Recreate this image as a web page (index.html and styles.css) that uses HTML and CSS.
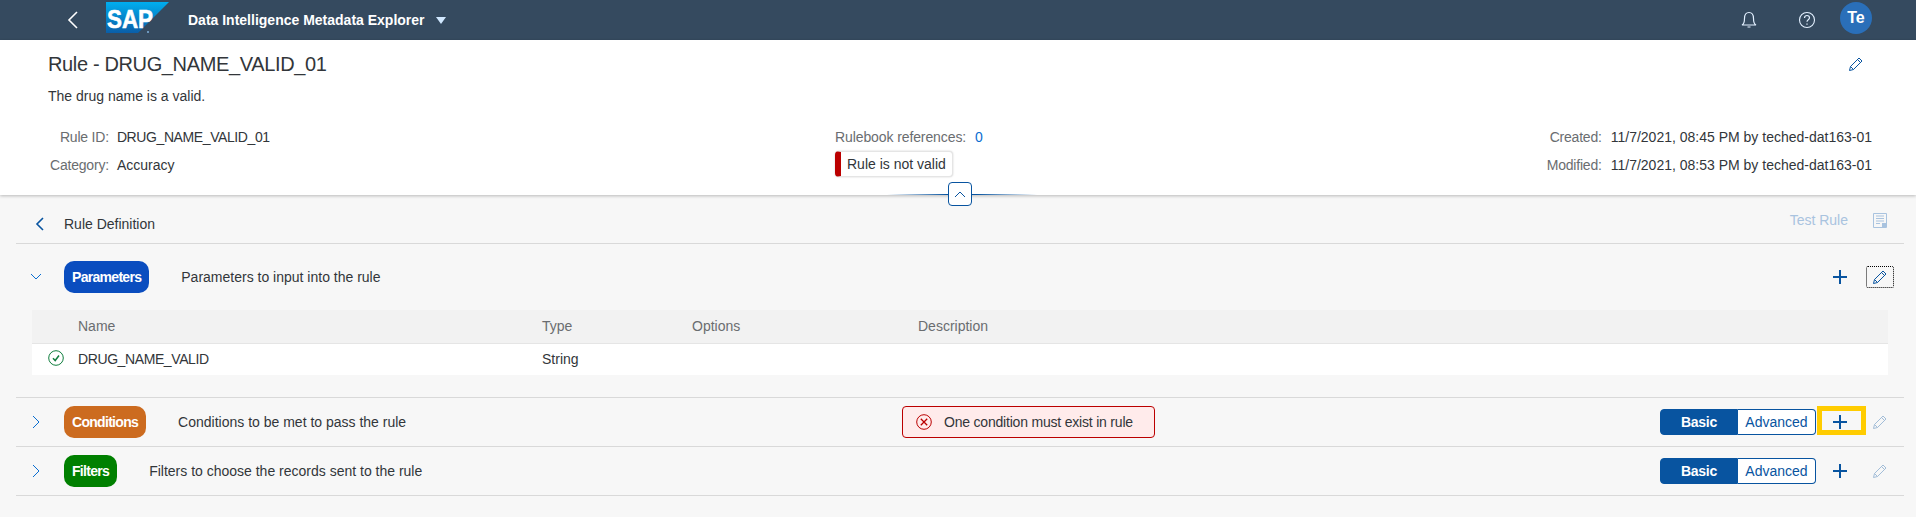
FILE: index.html
```html
<!DOCTYPE html>
<html>
	<head>
		<meta charset="UTF-8">
		<title>Rule - DRUG_NAME_VALID_01</title>
		<link rel="stylesheet" href="styles.css">
	</head>
	<body>
		<div class="shell">
			<svg class="shell-back" width="12" height="20" viewBox="0 0 12 20"><path d="M10 2L2 10l8 8" fill="none" stroke="#fff" stroke-width="1.6"/></svg>
			<svg class="logo" width="63" height="31" viewBox="0 0 63 31">
				<defs>
					<linearGradient id="logoGrad" x1="0" y1="0" x2="0" y2="1">
						<stop offset="0" stop-color="#00aeef"/>
						<stop offset="1" stop-color="#0a5ea8"/>
					</linearGradient>
				</defs>
				<polygon points="0,0 63,0 32,31 0,31" fill="url(#logoGrad)"/>
				<text x="1" y="26" class="logo-text" textLength="46" lengthAdjust="spacingAndGlyphs">SAP</text>
				<circle cx="42" cy="30" r="1" fill="#7fb2dc"/>
			</svg>
			<span class="shell-title">Data Intelligence Metadata Explorer</span>
			<span class="shell-arrow"></span>
			<div class="shell-right">
				<svg width="16" height="18" viewBox="0 0 16 18"><path d="M1 14c2-1 2.500-3 2.500-6.500C3.500 4 5 1.500 8 1.500s4.500 2.500 4.500 6c0 3.500.5 5.500 2.500 6.500zM6.500 16h3" fill="none" stroke="#e3f0ff" stroke-width="1.200"/></svg>
				<svg class="shell-help" width="18" height="18" viewBox="0 0 18 18"><circle cx="9" cy="9" r="7.500" fill="none" stroke="#e3f0ff" stroke-width="1.100"/><path d="M6.500 7c0-1.500 1-2.500 2.500-2.500s2.500 1 2.500 2.300c0 2-2.500 2-2.500 4M9 12.500v1.300" fill="none" stroke="#e3f0ff" stroke-width="1.200"/></svg>
				<span class="avatar">Te</span>
			</div>
		</div>

		<div class="top">
			<div class="top-head">
				<h1 class="top-title">Rule - DRUG_NAME_VALID_01</h1>
				<svg class="icon-edit" width="16" height="16" viewBox="0 0 16 16"><path d="M1.500 14.500l1-4L11 2l3 3-8.500 8.500zM2.500 10.500l3 3M9.500 3.500l3 3" fill="none" stroke="#0854a0"/></svg>
			</div>
			<p class="top-desc">The drug name is a valid.</p>
			<div class="meta">
				<div class="meta-list meta-left">
					<span class="label">Rule ID:</span><span class="id-text">DRUG_NAME_VALID_01</span>
					<span class="label">Category:</span><span>Accuracy</span>
				</div>
				<div class="meta-mid">
					<div class="refs"><span class="label">Rulebook references:</span><a class="refs-num">0</a></div>
					<div class="chip">Rule is not valid</div>
				</div>
				<div class="meta-list meta-right">
					<span class="label">Created:</span><span>11/7/2021, 08:45 PM by teched-dat163-01</span>
					<span class="label">Modified:</span><span>11/7/2021, 08:53 PM by teched-dat163-01</span>
				</div>
			</div>
			<div class="collapse">
				<span class="collapse-btn"><svg width="12" height="8" viewBox="0 0 12 8"><path d="M1 7l5-5 5 5" fill="none" stroke="#0854a0"/></svg></span>
			</div>
		</div>

		<div class="main">
			<div class="def-head">
				<svg class="def-back" width="10" height="14" viewBox="0 0 10 14"><path d="M8 1L2 7l6 6" fill="none" stroke="#0854a0" stroke-width="1.600"/></svg>
				<span class="def-title">Rule Definition</span>
				<span class="test-rule">Test Rule</span>
				<svg class="save" width="14" height="15" viewBox="0 0 14 15"><path d="M.5.500h13v14H.5zM3 3h8M3 5.500h8M3 8h8M3 10.500h4" fill="none" stroke="#a9c3df"/><path d="M9 10h4v4H9z" fill="#a9c3df"/></svg>
			</div>

			<div class="sec sec-open">
				<div class="sec-title">
					<span class="twist"><svg width="12" height="8" viewBox="0 0 12 8"><path d="M1 1l5 5 5-5" fill="none" stroke="#0a6ed1"/></svg></span>
					<span class="pill pill-blue">Parameters</span>
					<span class="sec-desc">Parameters to input into the rule</span>
				</div>
				<div class="actions">
					<span class="add"><svg width="14" height="14" viewBox="0 0 14 14"><path d="M7 0v14M0 7h14" stroke="#0854a0" stroke-width="2"/></svg></span>
					<span class="edit edit-focus"><svg width="16" height="16" viewBox="0 0 16 16"><path d="M1.500 14.500l1-4L11 2l3 3-8.500 8.500zM2.500 10.500l3 3M9.500 3.500l3 3" fill="none" stroke="#0854a0"/></svg></span>
				</div>
			</div>
			<table class="params">
				<thead>
					<tr><th class="col-icon"></th><th class="col-name">Name</th><th class="col-type">Type</th><th class="col-opt">Options</th><th>Description</th></tr>
				</thead>
				<tbody>
					<tr>
						<td class="cell-icon"><svg width="16" height="16" viewBox="0 0 16 16"><circle cx="8" cy="8" r="7.300" fill="none" stroke="#107e3e"/><path d="M5 8.200l2.200 2.300L11 5.500" fill="none" stroke="#107e3e" stroke-width="1.500"/></svg></td>
						<td class="id-text">DRUG_NAME_VALID</td><td>String</td><td></td><td></td>
					</tr>
				</tbody>
			</table>

			<div class="sec sec-closed sec-first">
				<div class="sec-title sec-title-wide">
					<span class="twist"><svg width="8" height="14" viewBox="0 0 8 14"><path d="M1 1l6 6-6 6" fill="none" stroke="#0a6ed1"/></svg></span>
					<span class="pill pill-orange">Conditions</span>
					<span class="sec-desc">Conditions to be met to pass the rule</span>
				</div>
				<div class="error">
					<svg width="16" height="16" viewBox="0 0 16 16"><circle cx="8" cy="8" r="7.300" fill="none" stroke="#bb0000"/><path d="M4.800 4.800l6.400 6.400M11.200 4.800l-6.400 6.400" stroke="#bb0000" stroke-width="1.300"/></svg>
					<span class="error-text">One condition must exist in rule</span>
				</div>
				<div class="actions">
					<div class="seg"><span class="seg-on">Basic</span><span class="seg-off">Advanced</span></div>
					<span class="add add-marked"><svg width="14" height="14" viewBox="0 0 14 14"><path d="M7 0v14M0 7h14" stroke="#0854a0" stroke-width="2"/></svg><span class="mark"></span></span>
					<span class="edit edit-off"><svg width="16" height="16" viewBox="0 0 16 16"><path d="M1.500 14.500l1-4L11 2l3 3-8.500 8.500zM2.500 10.500l3 3M9.500 3.500l3 3" fill="none" stroke="#0854a0"/></svg></span>
				</div>
			</div>

			<div class="sec sec-closed">
				<div class="sec-title">
					<span class="twist"><svg width="8" height="14" viewBox="0 0 8 14"><path d="M1 1l6 6-6 6" fill="none" stroke="#0a6ed1"/></svg></span>
					<span class="pill pill-green">Filters</span>
					<span class="sec-desc">Filters to choose the records sent to the rule</span>
				</div>
				<div class="actions">
					<div class="seg"><span class="seg-on">Basic</span><span class="seg-off">Advanced</span></div>
					<span class="add"><svg width="14" height="14" viewBox="0 0 14 14"><path d="M7 0v14M0 7h14" stroke="#0854a0" stroke-width="2"/></svg></span>
					<span class="edit edit-off"><svg width="16" height="16" viewBox="0 0 16 16"><path d="M1.500 14.500l1-4L11 2l3 3-8.500 8.500zM2.500 10.500l3 3M9.500 3.500l3 3" fill="none" stroke="#0854a0"/></svg></span>
				</div>
			</div>
		</div>
	</body>
</html>
```

FILE: styles.css
```css
*{
	margin: 0;
	padding: 0;
	box-sizing: border-box;
}
html, body{
	height: 100%;
}
body{
	font: 14px/20px "Liberation Sans", Arial, sans-serif;
	color: #32363a;
	background: #f7f7f7;
	overflow: hidden;
}
.id-text{
	letter-spacing: -.4px;
}

/* shell bar */
.shell{
	height: 40px;
	background: #354a5f;
	display: flex;
	align-items: center;
	color: #fff;
}
.shell-back{
	margin-left: 67px;
}
.logo{
	margin: -5px 0 0 27px;
	flex: none;
}
.logo-text{
	font: bold 26px "Liberation Sans", Arial, sans-serif;
	fill: #fff;
	stroke: #fff;
	stroke-width: .6;
}
.shell-title{
	margin-left: 19px;
	font-weight: bold;
}
.shell-arrow{
	margin-left: 11px;
	border-left: 5px solid transparent;
	border-right: 5px solid transparent;
	border-top: 7px solid #d1e8ff;
}
.shell-right{
	margin-left: auto;
	margin-right: 44px;
	display: flex;
	align-items: center;
}
.shell-help{
	margin-left: 41px;
}
.avatar{
	width: 32px;
	height: 32px;
	margin: -4px 0 0 24px;
	border-radius: 50%;
	background: #2a6fb9;
	font-size: 16px;
	font-weight: bold;
	line-height: 32px;
	text-align: center;
}

/* object header */
.top{
	position: relative;
	height: 155px;
	padding: 10px 44px 0 48px;
	background: #fff;
	box-shadow: 0 1px 3px rgba(0,0,0,.25);
}
.top-head{
	display: flex;
	align-items: center;
	justify-content: space-between;
	height: 28px;
}
.top-title{
	font-size: 20px;
	font-weight: normal;
	line-height: 28px;
	letter-spacing: -.36px;
}
.icon-edit{
	margin-right: 8px;
}
.top-desc{
	margin-top: 8px;
}
.meta{
	display: grid;
	grid-template-columns: 787px 1fr auto;
	margin-top: 19px;
}
.meta-list{
	display: grid;
	grid-template-columns: auto auto;
	grid-auto-rows: 24px;
	row-gap: 4px;
	column-gap: 8px;
	line-height: 24px;
	justify-content: start;
}
.meta-left{
	padding-left: 2px;
}
.meta-right{
	column-gap: 9px;
}
.label{
	color: #6a6d70;
	text-align: right;
	letter-spacing: -.2px;
}
.refs{
	line-height: 24px;
}
.refs .label{
	letter-spacing: -.1px;
}
.refs-num{
	margin-left: 9px;
	color: #0a6ed1;
}
.chip{
	width: 118px;
	height: 26px;
	margin-top: 2px;
	padding-left: 6px;
	line-height: 24px;
	background: #fff;
	border: 1px solid #e5e5e5;
	border-left: 6px solid #bb0000;
	border-radius: 4px;
	box-shadow: 0 0 2px rgba(0,0,0,.2);
}
.collapse{
	position: absolute;
	left: 887px;
	bottom: 0;
	width: 150px;
	height: 1px;
	background: linear-gradient(to right, rgba(8,84,160,0), #0854a0 40%, #0854a0 60%, rgba(8,84,160,0));
}
.collapse-btn{
	position: absolute;
	left: 61px;
	top: -12px;
	width: 24px;
	height: 24px;
	background: #fff;
	border: 1px solid #0854a0;
	border-radius: 4px;
	display: flex;
	align-items: center;
	justify-content: center;
}

/* rule definition */
.main{
	margin: 0 12px 0 16px;
}
.def-head{
	height: 49px;
	display: flex;
	align-items: center;
	border-bottom: 1px solid #d9d9d9;
}
.def-back{
	margin: 10px 19px 0;
}
.def-title{
	margin-top: 10px;
}
.test-rule{
	margin: 2px 0 0 auto;
	color: #a9c3df;
}
.save{
	margin: 2px 17px 0 25px;
}
.sec{
	display: flex;
	align-items: center;
}
.sec-open{
	height: 66px;
}
.sec-closed{
	height: 49px;
	border-bottom: 1px solid #d9d9d9;
}
.sec-first{
	margin-top: 22px;
	height: 50px;
	border-top: 1px solid #d9d9d9;
}
.sec-title{
	display: flex;
	align-items: center;
}
.sec-title-wide{
	width: 886px;
}
.twist{
	width: 40px;
	margin-right: 8px;
	display: flex;
	justify-content: center;
}
.pill{
	height: 32px;
	padding: 0 8px;
	border-radius: 10px;
	color: #fff;
	font-weight: bold;
	line-height: 32px;
	letter-spacing: -.7px;
}
.pill-blue{
	background: #0a4dbf;
}
.pill-orange{
	background: #cc6b1f;
}
.pill-green{
	background: #008000;
}
.sec-desc{
	margin-left: 32px;
}
.actions{
	margin-left: auto;
	padding-right: 10px;
	display: flex;
	align-items: center;
}
.add{
	position: relative;
	width: 30px;
	height: 26px;
	margin: 0 11px 0 9px;
	display: flex;
	align-items: center;
	justify-content: center;
}
.mark{
	position: absolute;
	left: -8px;
	right: -11px;
	top: -3px;
	bottom: 0;
	border: 5px solid #fc0;
}
.edit{
	width: 28px;
	height: 22px;
	display: flex;
	align-items: center;
	justify-content: center;
}
.edit-focus{
	border: 1px dotted #000;
	border-radius: 2px;
}
.edit-off{
	opacity: .35;
}
.seg{
	display: flex;
	height: 26px;
	line-height: 24px;
}
.seg-on{
	width: 78px;
	background: #0854a0;
	border: 1px solid #0854a0;
	border-radius: 4px 0 0 4px;
	color: #fff;
	font-weight: bold;
	letter-spacing: -.3px;
	text-align: center;
}
.seg-off{
	width: 78px;
	background: #fff;
	border: 1px solid #0854a0;
	border-left: 0;
	border-radius: 0 4px 4px 0;
	color: #0854a0;
	text-align: center;
}
.error{
	width: 253px;
	height: 32px;
	padding-left: 13px;
	display: flex;
	align-items: center;
	gap: 12px;
	background: #ffebeb;
	border: 1px solid #bb0000;
	border-radius: 4px;
}
.error-text{
	letter-spacing: -.2px;
}

/* parameter table */
.params{
	width: 1856px;
	margin-left: 16px;
	border-collapse: collapse;
	table-layout: fixed;
}
.params th{
	height: 33px;
	background: #f2f2f2;
	border-bottom: 1px solid #e5e5e5;
	color: #6a6d70;
	font-weight: normal;
	text-align: left;
}
.params td{
	height: 32px;
	background: #fff;
}
.col-icon{
	width: 46px;
}
.col-name{
	width: 464px;
}
.col-type{
	width: 150px;
}
.col-opt{
	width: 226px;
}
.cell-icon{
	padding: 3px 0 0 16px;
}
```
